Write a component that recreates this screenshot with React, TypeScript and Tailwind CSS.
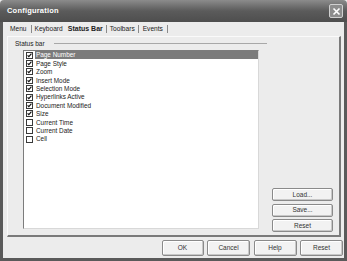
import React from "react";

const items = [
  { label: "Page Number", checked: true },
  { label: "Page Style", checked: true },
  { label: "Zoom", checked: true },
  { label: "Insert Mode", checked: true },
  { label: "Selection Mode", checked: true },
  { label: "Hyperlinks Active", checked: true },
  { label: "Document Modified", checked: true },
  { label: "Size", checked: true },
  { label: "Current Time", checked: false },
  { label: "Current Date", checked: false },
  { label: "Cell", checked: false },
];

function Check({ checked }: { checked: boolean }) {
  return (
    <div className="w-[7px] h-[7px] border border-[#3a3a3a] bg-white flex items-center justify-center shrink-0">
      {checked && (
        <svg width="7" height="7" viewBox="0 0 7 7" className="block">
          <path d="M0.8 3.2 L2.6 5.2 L6.2 0.8" stroke="#111" strokeWidth="1.6" fill="none" />
        </svg>
      )}
    </div>
  );
}

function Btn({ children, w }: { children: React.ReactNode; w: string }) {
  return (
    <div
      className={`${w} h-full flex items-center justify-center bg-[#f2f2f2] border border-[#8a8a8a] rounded-[2px] shadow-[inset_-1px_-1px_0_#c8c8c8,inset_1px_1px_0_#ffffff] text-[6.5px] text-[#333]`}
    >
      {children}
    </div>
  );
}

export default function App() {
  return (
    <div
      className="w-[347px] h-[261px] bg-[#ececec] flex flex-col overflow-hidden"
      style={{ fontFamily: '"Liberation Sans", Arial, sans-serif' }}
    >
      {/* Title bar */}
      <div className="h-[22px] shrink-0 bg-gradient-to-b from-[#8c8c8c] via-[#5b5b5b] to-[#4e4e4e] flex items-center pl-[7px] pr-[4px] rounded-t-[4px]">
        <span className="text-white font-bold text-[7.5px] tracking-[0.2px]">Configuration</span>
        <div className="ml-auto w-[14px] h-[14px] rounded-[2px] border border-[#d0d0d0] bg-[#8d8d8d] flex items-center justify-center">
          <svg width="9" height="9" viewBox="0 0 9 9">
            <path d="M1.5 1.5 L7.5 7.5 M7.5 1.5 L1.5 7.5" stroke="#fff" strokeWidth="1.6" />
          </svg>
        </div>
      </div>

      {/* Body with frame */}
      <div className="flex-1 flex flex-col border-x-[3px] border-b-[3px] border-[#5a5a5a]">
        {/* Tabs */}
        <div className="h-[14px] shrink-0 flex items-center pl-[7px] text-[6.6px] text-[#222]">
          <span>Menu</span>
          <div className="w-px h-[8px] bg-[#8a8a8a] ml-[4px] mr-[3px]" />
          <span>Keyboard</span>
          <span className="ml-[5px] font-bold text-[7px]">Status Bar</span>
          <div className="w-px h-[8px] bg-[#8a8a8a] ml-[3px] mr-[3px]" />
          <span>Toolbars</span>
          <div className="w-px h-[8px] bg-[#8a8a8a] ml-[3px] mr-[4px]" />
          <span>Events</span>
          <div className="w-px h-[8px] bg-[#8a8a8a] ml-[4px]" />
        </div>

        {/* Panel */}
        <div className="h-[201px] shrink-0 ml-[4px] mr-[3px] border-t border-l border-t-[#fafafa] border-l-[#fafafa] border-r-[2px] border-b-[2px] border-r-[#7a7a7a] border-b-[#7a7a7a] flex flex-col pl-[7px]">
          <div className="h-[9px] mt-[2px] flex items-center w-[252px] text-[6.5px] text-[#222]">
            <span>Status bar</span>
            <div className="flex-1 h-px bg-[#a8a8a8] ml-[9px]" />
          </div>
          <div className="flex mt-[2px] ml-[8px]">
            <div className="w-[236px] h-[179px] bg-white border border-[#7c7c7c] border-r-[#d8d8d8] border-b-[#d8d8d8] pl-[2px]">
              {items.map((it, i) => (
                <div key={it.label} className="h-[8.4px] flex items-center">
                  <Check checked={it.checked} />
                  <div
                    className={`ml-[1.5px] flex-1 h-full flex items-center pl-[1.5px] text-[6.4px] ${
                      i === 0 ? "bg-[#7b7b7b] text-white" : "text-[#222]"
                    }`}
                  >
                    {it.label}
                  </div>
                </div>
              ))}
            </div>
            <div className="ml-[13px] w-[61px] flex flex-col justify-end gap-[2.5px] -mb-[3px]">
              <div className="h-[13px]"><Btn w="w-full">Load...</Btn></div>
              <div className="h-[13px]"><Btn w="w-full">Save...</Btn></div>
              <div className="h-[13px]"><Btn w="w-full">Reset</Btn></div>
            </div>
          </div>
        </div>

        {/* Bottom buttons */}
        <div className="flex-1 flex items-center justify-end pr-[1px]">
          <div className="h-[16px] flex gap-[3.5px]">
            <Btn w="w-[42px]">OK</Btn>
            <Btn w="w-[43px]">Cancel</Btn>
            <Btn w="w-[43px]">Help</Btn>
            <Btn w="w-[43px]">Reset</Btn>
          </div>
        </div>
      </div>
    </div>
  );
}
